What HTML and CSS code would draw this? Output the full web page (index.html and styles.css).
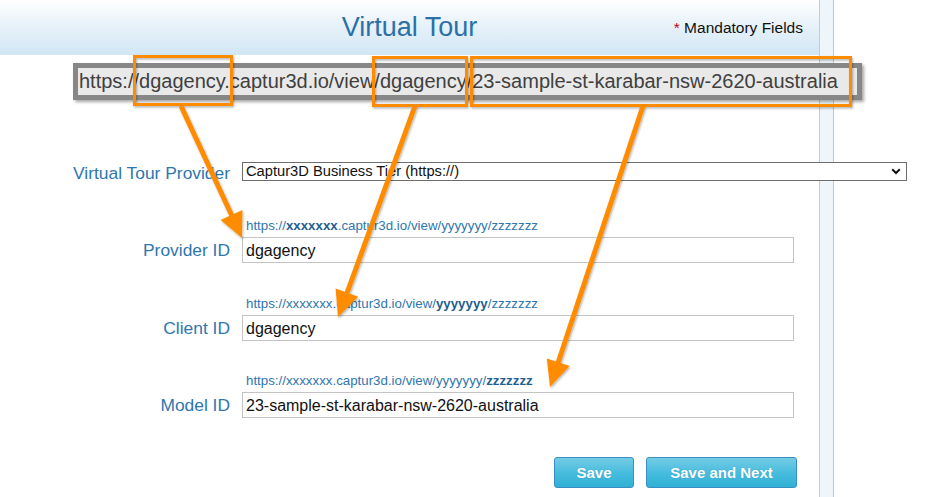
FILE: index.html
```html
<!DOCTYPE html>
<html lang="en">
<head>
<meta charset="utf-8">
<title>Virtual Tour</title>
<link rel="stylesheet" href="styles.css">
</head>
<body>
<div class="page">
  <header class="header">
    <div class="header-spacer"></div>
    <h1 class="title">Virtual Tour</h1>
    <div class="mandatory"><span class="req">*</span> Mandatory Fields</div>
  </header>

  <div class="url">https://dgagency.captur3d.io/view/dgagency/23-sample-st-karabar-nsw-2620-australia</div>

  <form class="form">
    <div class="row row-provider">
      <label class="label label-select">Virtual Tour Provider</label>
      <div class="select">
        <span class="select-text">Captur3D Business Tier (https://)</span>
        <svg class="chevron" width="10" height="7" viewBox="0 0 10 7"><path d="M1.2 1.3 L5 5 L8.8 1.3" fill="none" stroke="#111" stroke-width="2"/></svg>
      </div>
    </div>

    <div class="row row-field row-first">
      <label class="label">Provider ID</label>
      <div class="field">
        <div class="hint">https://<b>xxxxxxx</b>.captur3d.io/view/yyyyyyy/zzzzzzz</div>
        <input class="input" type="text" value="dgagency">
      </div>
    </div>

    <div class="row row-field row-second">
      <label class="label">Client ID</label>
      <div class="field">
        <div class="hint">https://xxxxxxx.captur3d.io/view/<b>yyyyyyy</b>/zzzzzzz</div>
        <input class="input" type="text" value="dgagency">
      </div>
    </div>

    <div class="row row-field row-third">
      <label class="label">Model ID</label>
      <div class="field">
        <div class="hint">https://xxxxxxx.captur3d.io/view/yyyyyyy/<b>zzzzzzz</b></div>
        <input class="input" type="text" value="23-sample-st-karabar-nsw-2620-australia">
      </div>
    </div>

    <div class="row row-actions">
      <span></span>
      <div class="actions">
        <button type="button" class="btn btn-save">Save</button>
        <button type="button" class="btn btn-next">Save and Next</button>
      </div>
    </div>
  </form>

  <svg class="annotations" width="933" height="497" viewBox="0 0 933 497">
    <defs>
      <filter id="sh" x="-20%" y="-20%" width="140%" height="140%">
        <feDropShadow dx="1" dy="1.5" stdDeviation="1.2" flood-color="#000" flood-opacity="0.3"/>
      </filter>
    </defs>
    <g fill="none" stroke="#ff8c00" stroke-width="3" filter="url(#sh)">
      <rect x="134.5" y="56.5" width="97" height="48"/>
      <rect x="373.5" y="57.5" width="93" height="48"/>
      <rect x="471.5" y="57.5" width="379" height="48"/>
    </g>
    <g filter="url(#sh)">
      <line x1="181" y1="106" x2="232" y2="216" stroke="#ff8c00" stroke-width="5"/>
      <polygon points="242,238 220.6,220 242.4,210" fill="#ff8c00"/>
      <line x1="415" y1="106" x2="347" y2="293" stroke="#ff8c00" stroke-width="5"/>
      <polygon points="338,317 335.6,288.5 358.2,296.7" fill="#ff8c00"/>
      <line x1="643" y1="106" x2="558" y2="363" stroke="#ff8c00" stroke-width="5"/>
      <polygon points="550,387 546.8,358.5 569.6,366.1" fill="#ff8c00"/>
    </g>
  </svg>
</div>
</body>
</html>
```

FILE: styles.css
```css
* {
  box-sizing: border-box;
}

html, body {
  margin: 0;
  padding: 0;
}

body {
  font-family: "Liberation Sans", Arial, Helvetica, sans-serif;
  color: #111;
  background: #fff;
}

.page {
  position: relative;
  width: 933px;
  height: 497px;
  overflow: hidden;
  background: linear-gradient(to right,
    #ffffff 0, #ffffff 819px,
    #c4ccd3 819px, #c4ccd3 820px,
    #eef6fb 820px, #eef6fb 833px,
    #c8c8c8 833px, #c8c8c8 834px,
    #ffffff 834px);
}

/* Header */
.header {
  width: 819px;
  height: 55px;
  display: grid;
  grid-template-columns: 1fr auto 1fr;
  align-items: center;
  background: linear-gradient(to bottom, #ffffff 0%, #e8f2f9 45%, #d1e6f3 100%);
}

.title {
  margin: 0;
  font-size: 27px;
  font-weight: normal;
  line-height: 55px;
  color: #2b70a7;
}

.mandatory {
  justify-self: end;
  padding-right: 16px;
  font-size: 15.5px;
  line-height: 55px;
  color: #111;
}

.req {
  color: #d0021b;
}

/* URL annotation bar */
.url {
  width: 789px;
  height: 37px;
  margin: 8px 0 0 73px;
  border: 5px solid #878787;
  background: #e9e9e9;
  padding-left: 1px;
  font-size: 20px;
  line-height: 27px;
  color: #404040;
  white-space: nowrap;
  box-shadow: 2px 2px 3px rgba(0, 0, 0, 0.35);
}

/* Form */
.form {
  margin: 62px 0 0 0;
  display: flex;
  flex-direction: column;
}

.row {
  display: grid;
  grid-template-columns: 230px auto;
  column-gap: 12px;
}

.label {
  justify-self: end;
  font-size: 17.4px;
  color: #2e77ae;
  white-space: nowrap;
}

.label-select {
  height: 19px;
  line-height: 19px;
  padding-top: 2px;
}

.row-field .label {
  align-self: end;
  line-height: 26px;
}

.select {
  width: 665px;
  height: 19px;
  border: 1px solid #6e6e6e;
  background: #fff;
  display: flex;
  align-items: center;
  justify-content: space-between;
  padding: 0 5px 0 3px;
  font-size: 14.7px;
  line-height: 17px;
  color: #111;
}

.chevron {
  display: block;
}

.row-first {
  margin-top: 37px;
}

.row-second {
  margin-top: 33px;
}

.row-third {
  margin-top: 32px;
}

.field {
  display: flex;
  flex-direction: column;
}

.hint {
  font-size: 13.3px;
  line-height: 16px;
  padding-left: 4px;
  margin-bottom: 3px;
  color: #2f76ad;
  white-space: nowrap;
}

.hint b {
  color: #1f5f91;
}

.input {
  display: block;
  width: 552px;
  height: 26px;
  margin: 0;
  border: 1px solid #c4c4c4;
  border-radius: 0;
  padding: 2px 3px 0 3px;
  font-family: "Liberation Sans", Arial, Helvetica, sans-serif;
  font-size: 16px;
  color: #111;
  background: #fff;
  outline: none;
}

/* Actions */
.row-actions {
  margin-top: 39px;
}

.actions {
  width: 555px;
  display: flex;
  justify-content: flex-end;
  gap: 12px;
}

.btn {
  height: 31px;
  margin: 0;
  padding: 0;
  border: 1px solid #3a8ec3;
  border-radius: 3px;
  background: linear-gradient(to bottom, #74cce6 0%, #45bbdd 55%, #2fb1d6 100%);
  color: #fff;
  font-family: "Liberation Sans", Arial, Helvetica, sans-serif;
  font-size: 15px;
  font-weight: bold;
  line-height: 29px;
  text-shadow: 0 0 1px rgba(0, 60, 100, 0.25);
}

.btn-save {
  width: 80px;
}

.btn-next {
  width: 151px;
}

/* Annotation overlay */
.annotations {
  position: absolute;
  left: 0;
  top: 0;
  pointer-events: none;
}
```
